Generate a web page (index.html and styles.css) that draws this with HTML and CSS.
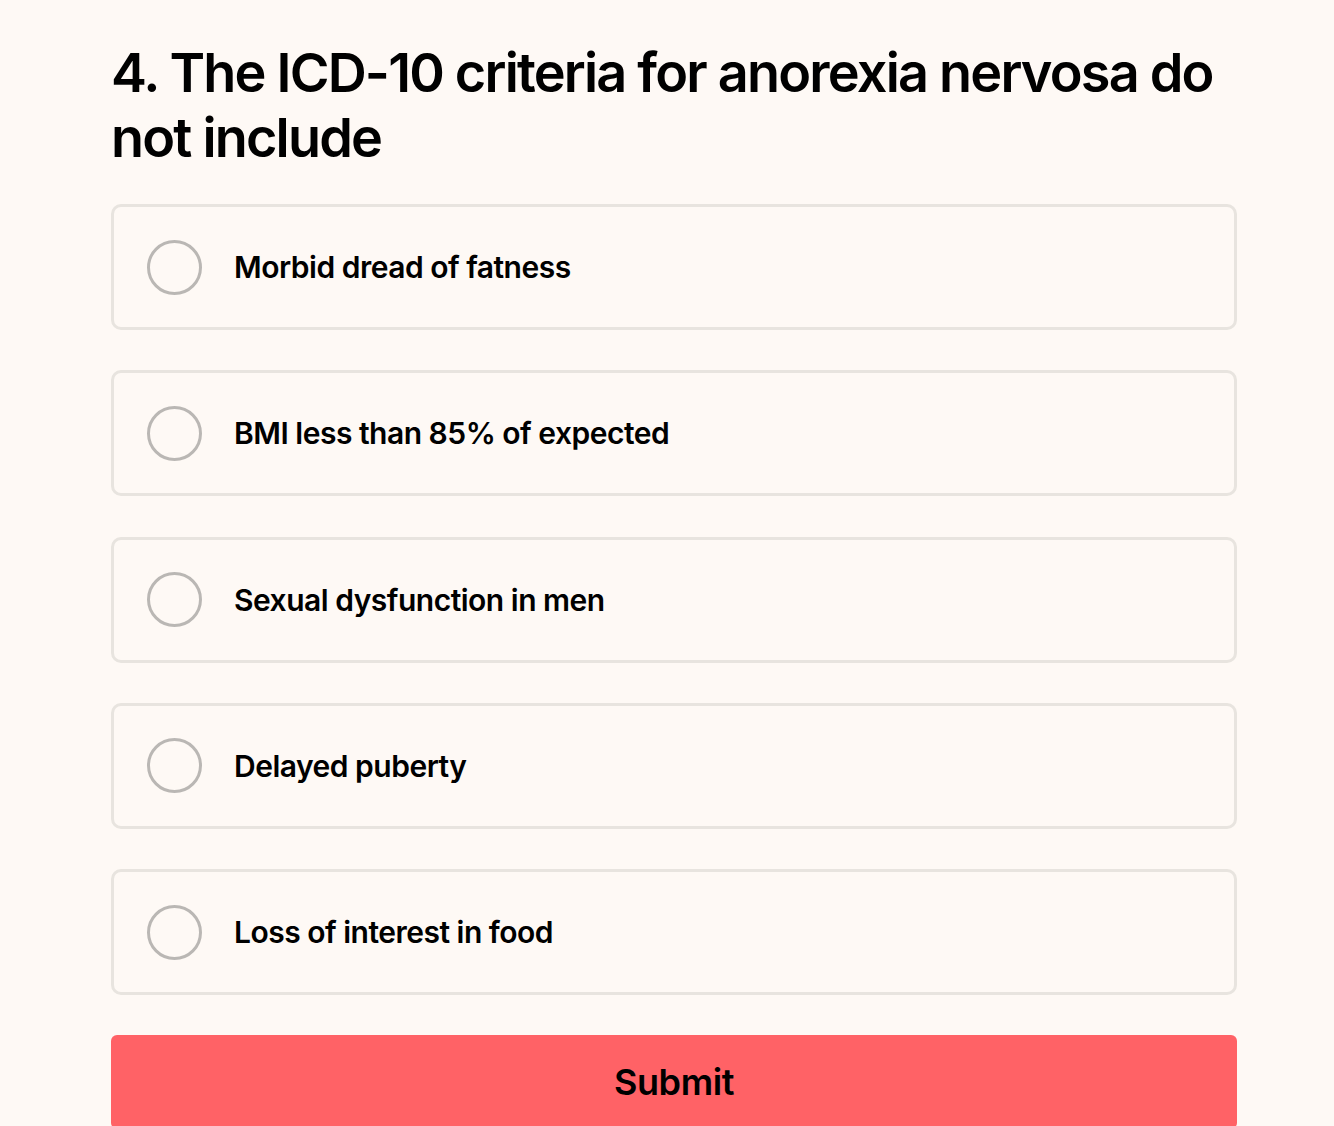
FILE: index.html
```html
<!DOCTYPE html>
<html lang="en">
<head>
<meta charset="utf-8">
<title>Quiz</title>
<link rel="stylesheet" href="styles.css">
</head>
<body>
<main class="quiz">
  <h1 class="question">4. The ICD-10 criteria for anorexia nervosa do not include</h1>
  <div class="options">
    <label class="option"><span class="radio"></span><span class="option-text">Morbid dread of fatness</span></label>
    <label class="option"><span class="radio"></span><span class="option-text">BMI less than 85% of expected</span></label>
    <label class="option"><span class="radio"></span><span class="option-text">Sexual dysfunction in men</span></label>
    <label class="option"><span class="radio"></span><span class="option-text">Delayed puberty</span></label>
    <label class="option"><span class="radio"></span><span class="option-text">Loss of interest in food</span></label>
  </div>
  <button class="submit" type="button">Submit</button>
</main>
</body>
</html>
```

FILE: styles.css
```css
html, body {
  margin: 0;
  padding: 0;
  background: #fef9f5;
}
body {
  font-family: Inter, "Noto Sans", sans-serif;
  color: #000;
}
.quiz {
  width: 1126px;
  padding: 40px 0 0 111px;
}
.question {
  margin: 0 0 34px;
  font-size: 54px;
  line-height: 65px;
  font-weight: 600;
  letter-spacing: -1.8px;
}
.options {
  display: flex;
  flex-direction: column;
  gap: 40.25px;
}
.option {
  display: flex;
  align-items: center;
  gap: 32px;
  height: 126px;
  flex: none;
  box-sizing: border-box;
  padding: 0 33px;
  border: 3px solid #e8e4df;
  border-radius: 10px;
}
.radio {
  width: 55px;
  height: 55px;
  box-sizing: border-box;
  border: 3px solid #bab7b4;
  border-radius: 50%;
  flex: none;
}
.option-text {
  font-size: 30px;
  font-weight: 600;
  letter-spacing: -0.5px;
}
.submit {
  display: block;
  width: 100%;
  margin-top: 40px;
  height: 94px;
  border: none;
  border-radius: 6px;
  background: #ff6266;
  font-family: Inter, "Noto Sans", sans-serif;
  font-size: 36px;
  font-weight: 600;
  letter-spacing: -0.4px;
  color: #000;
}
```
